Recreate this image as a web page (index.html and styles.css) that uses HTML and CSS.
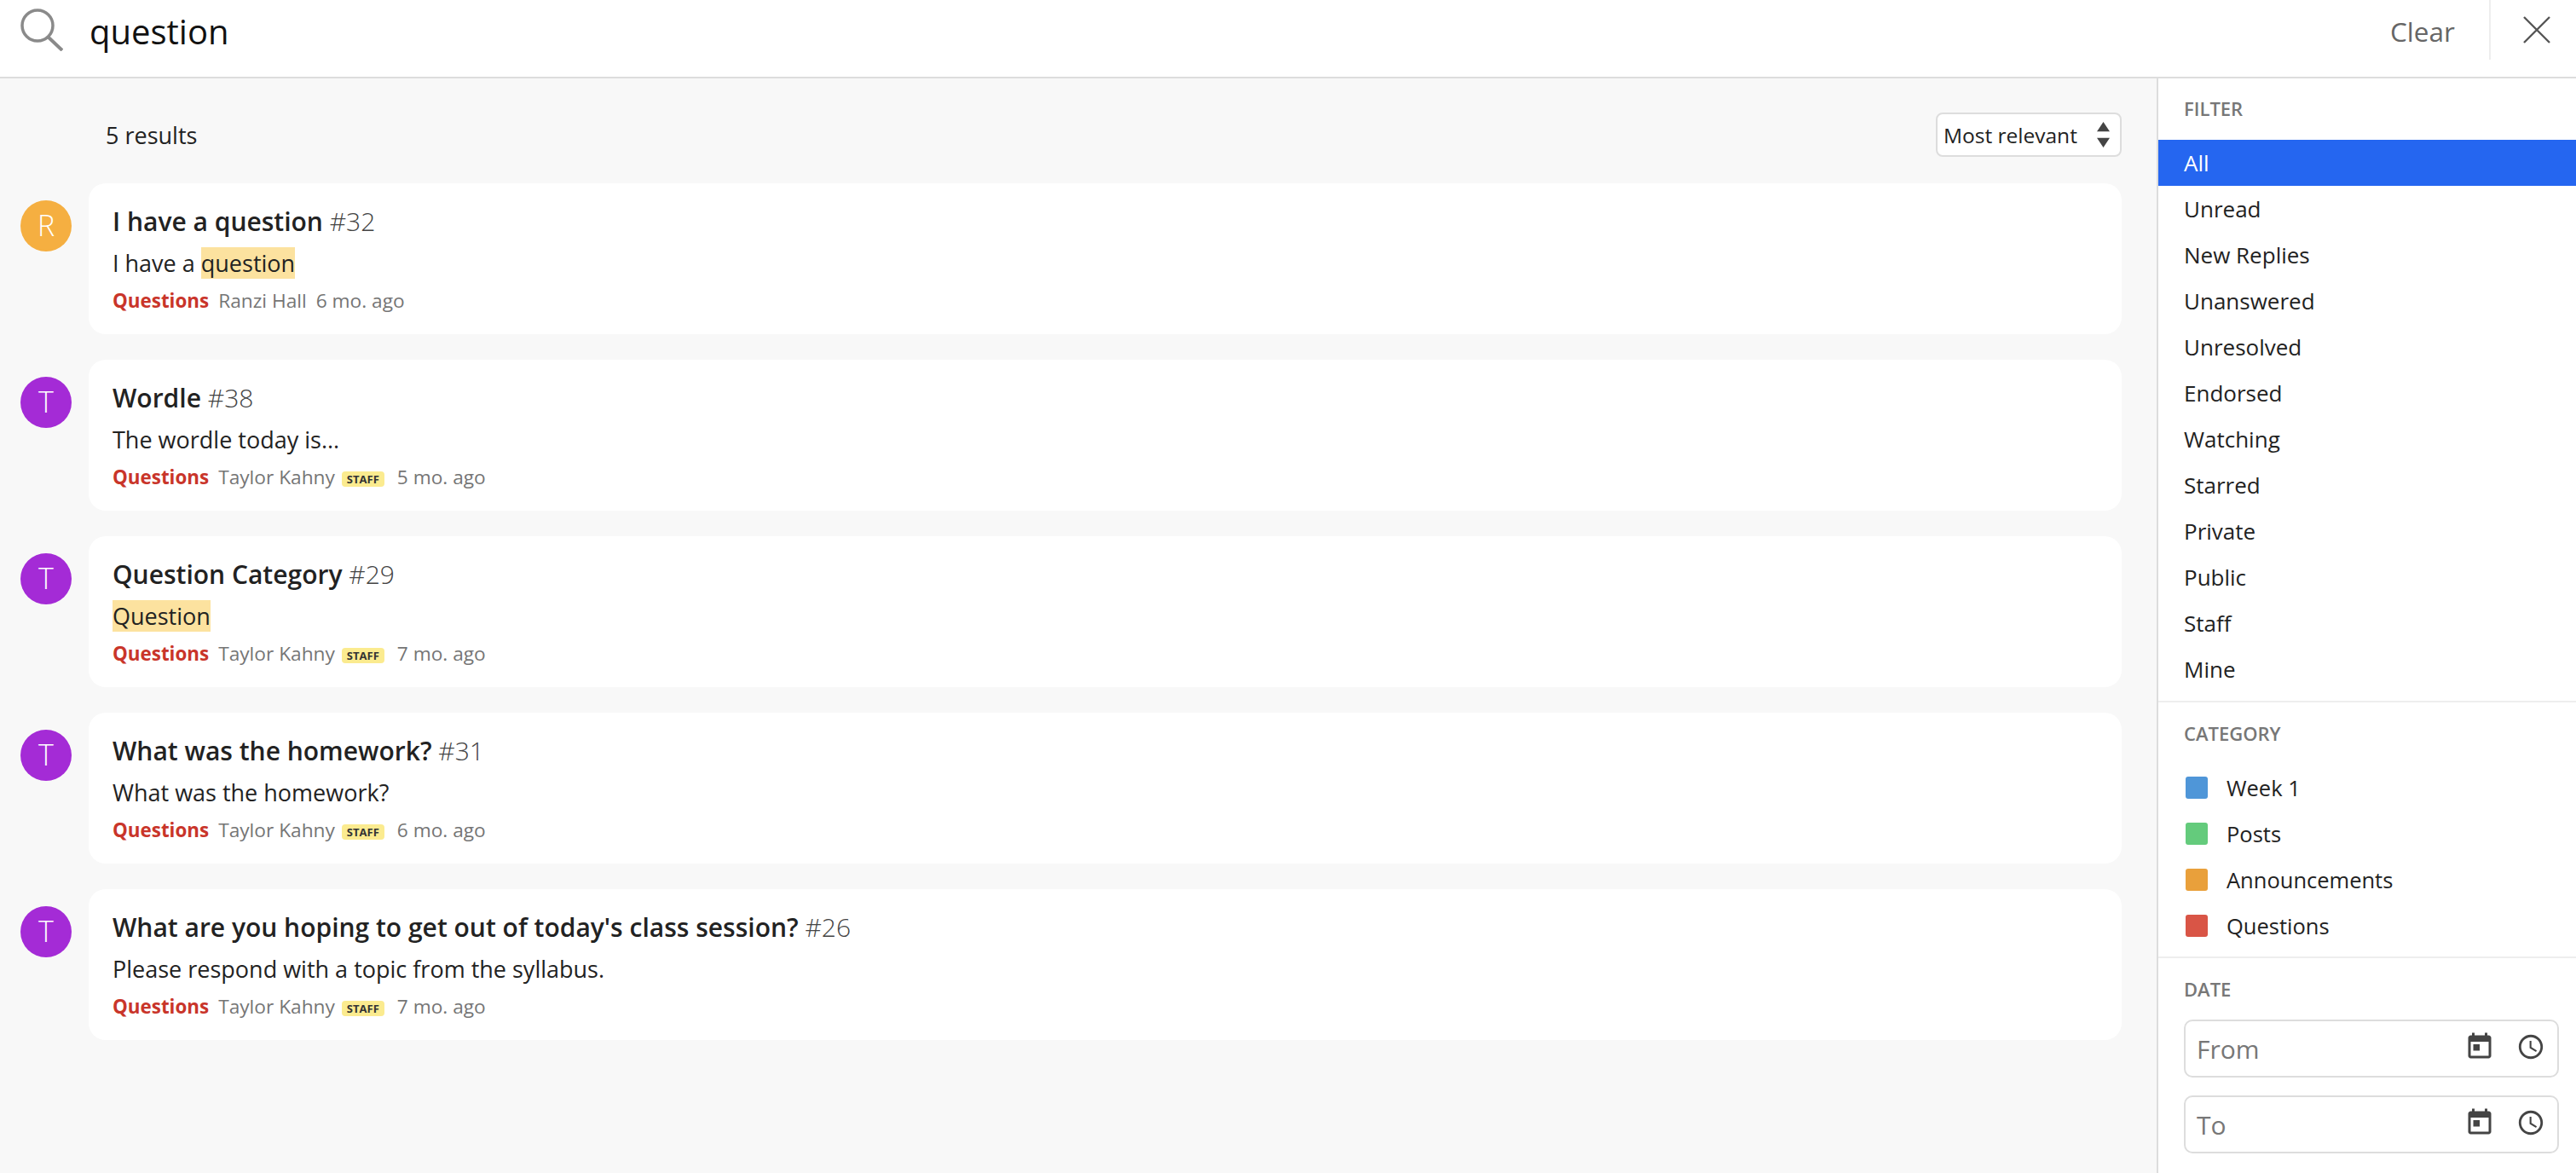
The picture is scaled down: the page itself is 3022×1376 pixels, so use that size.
FILE: index.html
```html
<!DOCTYPE html>
<html lang="en">
<head>
    <meta charset="UTF-8">
    <title>Search</title>
    <link rel="stylesheet" href="styles.css">
</head>
<body>
    <header class="search-bar">
        <svg class="search-icon" viewBox="0 0 50 50" fill="none" stroke="#8a8a8a">
            <circle cx="20" cy="20" r="18" stroke-width="3.5"/>
            <path d="M32 33l17 16" stroke-width="4"/>
        </svg>
        <div class="search-text">question</div>
        <div class="clear-btn">Clear</div>
        <div class="close-btn">
            <svg viewBox="0 0 32 32" fill="none" stroke="#555" stroke-width="2.4"><path d="M1 1l30 30M31 1L1 31"/></svg>
        </div>
    </header>

    <div class="content">
        <main class="results">
            <div class="results-head">
                <span>5 results</span>
                <div class="sort-select">
                    <span>Most relevant</span>
                    <svg viewBox="0 0 16 32" fill="#444"><path d="M8 0l8 12H0zM8 32l8-12H0z"/></svg>
                </div>
            </div>

            <div class="result-row">
                <div class="avatar avatar-orange">R</div>
                <div class="result-card">
                    <div class="result-title"><b>I have a question</b> <span class="num">#32</span></div>
                    <div class="result-body">I have a <mark>question</mark></div>
                    <div class="result-meta"><b>Questions</b><span>Ranzi Hall</span><span>6 mo. ago</span></div>
                </div>
            </div>
            <div class="result-row">
                <div class="avatar avatar-purple">T</div>
                <div class="result-card">
                    <div class="result-title"><b>Wordle</b> <span class="num">#38</span></div>
                    <div class="result-body">The wordle today is...</div>
                    <div class="result-meta"><b>Questions</b><span>Taylor Kahny<i class="staff">STAFF</i></span><span>5 mo. ago</span></div>
                </div>
            </div>
            <div class="result-row">
                <div class="avatar avatar-purple">T</div>
                <div class="result-card">
                    <div class="result-title"><b>Question Category</b> <span class="num">#29</span></div>
                    <div class="result-body"><mark>Question</mark></div>
                    <div class="result-meta"><b>Questions</b><span>Taylor Kahny<i class="staff">STAFF</i></span><span>7 mo. ago</span></div>
                </div>
            </div>
            <div class="result-row">
                <div class="avatar avatar-purple">T</div>
                <div class="result-card">
                    <div class="result-title"><b>What was the homework?</b> <span class="num">#31</span></div>
                    <div class="result-body">What was the homework?</div>
                    <div class="result-meta"><b>Questions</b><span>Taylor Kahny<i class="staff">STAFF</i></span><span>6 mo. ago</span></div>
                </div>
            </div>
            <div class="result-row">
                <div class="avatar avatar-purple">T</div>
                <div class="result-card">
                    <div class="result-title"><b>What are you hoping to get out of today's class session?</b> <span class="num">#26</span></div>
                    <div class="result-body">Please respond with a topic from the syllabus.</div>
                    <div class="result-meta"><b>Questions</b><span>Taylor Kahny<i class="staff">STAFF</i></span><span>7 mo. ago</span></div>
                </div>
            </div>
        </main>

        <aside class="sidebar">
            <section class="filter-section">
                <h3>FILTER</h3>
                <ul class="filter-list">
                    <li class="active">All</li>
                    <li>Unread</li>
                    <li>New Replies</li>
                    <li>Unanswered</li>
                    <li>Unresolved</li>
                    <li>Endorsed</li>
                    <li>Watching</li>
                    <li>Starred</li>
                    <li>Private</li>
                    <li>Public</li>
                    <li>Staff</li>
                    <li>Mine</li>
                </ul>
            </section>
            <section class="category-section">
                <h3>CATEGORY</h3>
                <ul class="filter-list">
                    <li class="category"><span class="swatch swatch-blue"></span>Week 1</li>
                    <li class="category"><span class="swatch swatch-green"></span>Posts</li>
                    <li class="category"><span class="swatch swatch-orange"></span>Announcements</li>
                    <li class="category"><span class="swatch swatch-red"></span>Questions</li>
                </ul>
            </section>
            <section class="date-section">
                <h3>DATE</h3>
                <div class="date-input">
                    <span class="placeholder">From</span>
                    <svg class="cal" viewBox="0 0 24 24" fill="#444"><path d="M19 3h-1V1h-2v2H8V1H6v2H5c-1.11 0-1.99.9-1.99 2L3 19c0 1.1.89 2 2 2h14c1.1 0 2-.9 2-2V5c0-1.1-.9-2-2-2zm0 16H5V8h14v11zM7 10h5v5H7z"/></svg>
                    <svg class="clock" viewBox="0 0 24 24" fill="#444"><path d="M11.99 2C6.47 2 2 6.48 2 12s4.47 10 9.99 10C17.52 22 22 17.52 22 12S17.52 2 11.99 2zM12 20c-4.42 0-8-3.58-8-8s3.58-8 8-8 8 3.58 8 8-3.58 8-8 8zM12.5 7H11v6l5.25 3.15.75-1.23-4.5-2.67z"/></svg>
                </div>
                <div class="date-input">
                    <span class="placeholder">To</span>
                    <svg class="cal" viewBox="0 0 24 24" fill="#444"><path d="M19 3h-1V1h-2v2H8V1H6v2H5c-1.11 0-1.99.9-1.99 2L3 19c0 1.1.89 2 2 2h14c1.1 0 2-.9 2-2V5c0-1.1-.9-2-2-2zm0 16H5V8h14v11zM7 10h5v5H7z"/></svg>
                    <svg class="clock" viewBox="0 0 24 24" fill="#444"><path d="M11.99 2C6.47 2 2 6.48 2 12s4.47 10 9.99 10C17.52 22 22 17.52 22 12S17.52 2 11.99 2zM12 20c-4.42 0-8-3.58-8-8s3.58-8 8-8 8 3.58 8 8-3.58 8-8 8zM12.5 7H11v6l5.25 3.15.75-1.23-4.5-2.67z"/></svg>
                </div>
            </section>
        </aside>
    </div>
</body>
</html>
```

FILE: styles.css
```css
* {
    box-sizing: border-box;
}

body {
    margin: 0;
    height: 1376px;
    overflow: hidden;
    display: flex;
    flex-direction: column;
    background-color: #f8f8f8;
    color: #222;
    font-family: "Open Sans", sans-serif;
}

.search-bar {
    display: flex;
    align-items: flex-start;
    height: 92px;
    flex-shrink: 0;
    background-color: white;
    border-bottom: 2px solid #ddd;
}

.search-icon {
    width: 50px;
    height: 50px;
    margin: 10px 0 0 24px;
}

.search-text {
    flex: 1;
    margin-left: 31px;
    font-size: 40px;
    line-height: 74px;
    color: #111;
}

.clear-btn {
    width: 116px;
    font-size: 31.5px;
    line-height: 74px;
    color: #666;
}

.close-btn {
    width: 102px;
    height: 70px;
    padding: 19px 0 0 38px;
    border-left: 2px solid #eee;
}

.close-btn svg {
    display: block;
    width: 32px;
    height: 32px;
}

.content {
    flex: 1;
    display: flex;
    min-height: 0;
}

.results {
    flex: 1;
    padding: 40px 41px 0 24px;
}

.results-head {
    display: flex;
    justify-content: space-between;
    align-items: center;
    height: 52px;
    margin-bottom: 31px;
    padding-left: 100px;
    font-size: 27px;
}

.sort-select {
    display: flex;
    align-items: center;
    justify-content: space-between;
    width: 218px;
    height: 52px;
    padding: 0 12px 0 7px;
    background-color: white;
    border: 2px solid #ddd;
    border-radius: 8px;
    font-size: 24.5px;
}

.sort-select svg {
    width: 15px;
    height: 30px;
}

.result-row {
    display: flex;
    gap: 20px;
    margin-bottom: 30px;
}

.avatar {
    flex-shrink: 0;
    width: 60px;
    height: 60px;
    margin-top: 20px;
    border-radius: 50%;
    color: white;
    font-size: 34px;
    font-weight: 300;
    line-height: 58px;
    text-align: center;
}

.avatar-orange {
    background-color: #f5af41;
}

.avatar-purple {
    background-color: #a42bd6;
}

.result-card {
    flex: 1;
    height: 177px;
    padding: 24px 28px 0;
    background-color: white;
    border-radius: 20px;
}

.result-title {
    font-size: 30px;
    line-height: 42px;
}

.result-title b {
    font-weight: 600;
}

.result-title .num {
    font-weight: 300;
    color: #444;
}

.result-body {
    margin-top: 7px;
    font-size: 27px;
    line-height: 42px;
}

.result-body mark {
    background-color: #fce29f;
    color: inherit;
}

.result-meta {
    display: flex;
    align-items: center;
    gap: 11px;
    margin-top: 7px;
    font-size: 22.7px;
    line-height: 32px;
    color: #757575;
}

.result-meta b {
    color: #c9352a;
    font-size: 22.4px;
    font-weight: 700;
}

.staff {
    display: inline-block;
    margin: 0 4px 0 8px;
    padding: 0 6px;
    background-color: #fbeb8f;
    border-radius: 4px;
    color: #333;
    font-size: 13px;
    font-style: normal;
    font-weight: 700;
    line-height: 18px;
    vertical-align: 1px;
}

.sidebar {
    width: 492px;
    flex-shrink: 0;
    background-color: white;
    border-left: 2px solid #ddd;
}

.sidebar h3 {
    margin: 0;
    padding-left: 30px;
    color: #777;
    font-size: 22px;
    font-weight: 600;
    line-height: 30px;
}

.filter-section {
    padding: 20px 0 10px;
    border-bottom: 2px solid #eee;
}

.filter-section h3 {
    margin-bottom: 22px;
}

.filter-list {
    margin: 0;
    padding: 0;
    list-style: none;
}

.filter-list li {
    height: 54px;
    padding-left: 30px;
    font-size: 26px;
    line-height: 54px;
}

.filter-list li.active {
    background-color: #2566f0;
    color: white;
}

.filter-list li.category {
    display: flex;
    align-items: center;
    gap: 22px;
    font-size: 25.5px;
}

.swatch {
    width: 26px;
    height: 26px;
    margin-left: 2px;
    border-radius: 3px;
}

.swatch-blue {
    background-color: #4f96d8;
}

.swatch-green {
    background-color: #64cb7c;
}

.swatch-orange {
    background-color: #e9a03b;
}

.swatch-red {
    background-color: #d95546;
}

.category-section {
    padding: 21px 0 9px;
    border-bottom: 2px solid #eee;
}

.category-section h3 {
    margin-bottom: 22px;
}

.date-section {
    padding-top: 21px;
}

.date-section h3 {
    margin-bottom: 21px;
}

.date-input {
    display: flex;
    align-items: center;
    width: 440px;
    height: 68px;
    margin: 0 0 21px 30px;
    padding: 0 14px 0 13px;
    border: 2px solid #ddd;
    border-radius: 10px;
}

.placeholder {
    flex: 1;
    color: #777;
    font-size: 30px;
}

.date-input svg {
    margin-top: -4px;
}

.cal {
    width: 36px;
    height: 36px;
}

.clock {
    width: 34px;
    height: 34px;
    margin-left: 25px;
}
```
